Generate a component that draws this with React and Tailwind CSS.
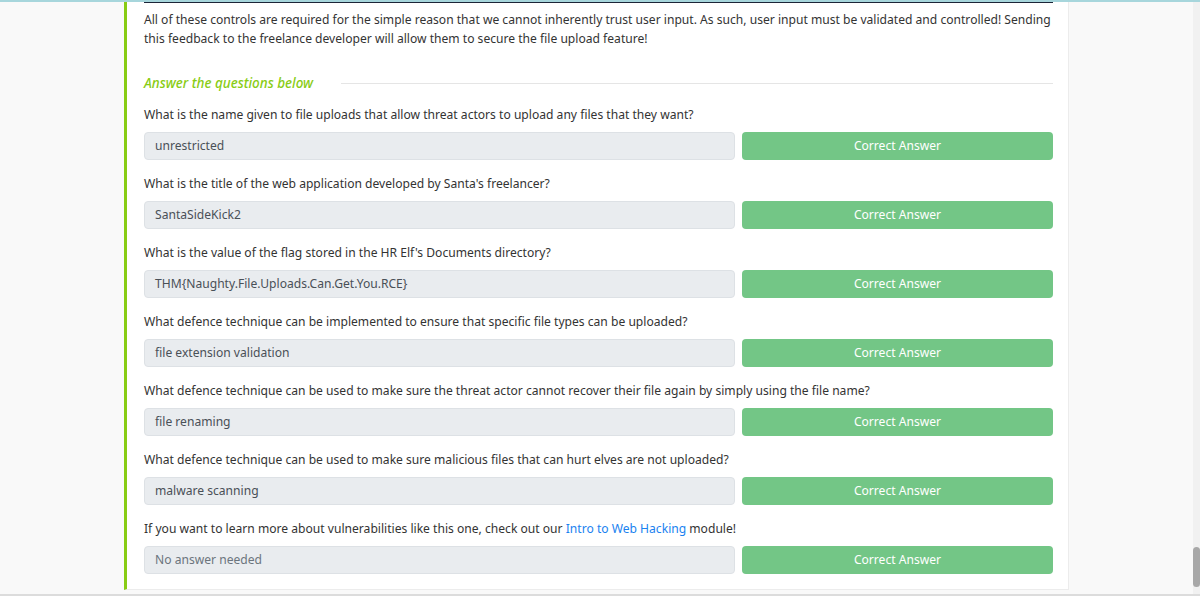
import React from "react";

const questions = [
  {
    q: "What is the name given to file uploads that allow threat actors to upload any files that they want?",
    a: "unrestricted",
  },
  {
    q: "What is the title of the web application developed by Santa's freelancer?",
    a: "SantaSideKick2",
  },
  {
    q: "What is the value of the flag stored in the HR Elf's Documents directory?",
    a: "THM{Naughty.File.Uploads.Can.Get.You.RCE}",
  },
  {
    q: "What defence technique can be implemented to ensure that specific file types can be uploaded?",
    a: "file extension validation",
  },
  {
    q: "What defence technique can be used to make sure the threat actor cannot recover their file again by simply using the file name?",
    a: "file renaming",
  },
  {
    q: "What defence technique can be used to make sure malicious files that can hurt elves are not uploaded?",
    a: "malware scanning",
  },
];

function AnswerRow({ question, answer, placeholder }) {
  return (
    <div className="mt-[14px] first:mt-0">
      <p className="h-5 leading-5">{question}</p>
      <div className="mt-[7px] flex gap-[7px]">
        <div
          className={
            "h-7 w-[591px] rounded border border-[#dde1e5] bg-[#e9ecef] px-[10px] leading-[26px] " +
            (placeholder ? "text-[#6c757d]" : "text-[#495057]")
          }
        >
          {answer}
        </div>
        <button className="h-7 flex-1 rounded bg-[#73c686] text-white leading-7">
          Correct Answer
        </button>
      </div>
    </div>
  );
}

export default function App() {
  return (
    <div
      className="relative h-[596px] w-[1200px] overflow-hidden border-t-2 border-[#a7d6dc] bg-[#f9f9f9] text-[12.1px] text-[#333]"
      style={{ fontFamily: '"Noto Sans", "Open Sans", sans-serif' }}
    >
      <div className="flex h-full">
        <div className="w-[124px] shrink-0" />
        <div className="h-[590px] w-[945px] shrink-0 border-l-[3px] border-r border-b border-[#88cc14] border-r-[#ececec] border-b-[#ececec] bg-white pl-[17px] pr-[15px] -mt-[2px] pt-[2px]">
          <div className="h-px bg-[#1c2538]" />
          <p className="mt-[7px] leading-[19px]">
            All of these controls are required for the simple reason that we cannot inherently trust user input. As such, user input must be validated and controlled! Sending this feedback to the freelance developer will allow them to secure the file upload feature!
          </p>
          <div className="mt-[23px] flex items-center gap-[28px]">
            <h3 className="text-[13.5px] italic font-medium leading-6 text-[#88cc14]">
              Answer the questions below
            </h3>
            <div className="h-px flex-1 bg-[#e5e5e5]" />
          </div>
          <div className="mt-[10px]">
            {questions.map((item) => (
              <AnswerRow key={item.q} question={item.q} answer={item.a} />
            ))}
            <AnswerRow
              question={
                <>
                  If you want to learn more about vulnerabilities like this one, check out our{" "}
                  <span className="text-[#1a82f0]">Intro to Web Hacking</span> module!
                </>
              }
              answer="No answer needed"
              placeholder
            />
          </div>
        </div>
      </div>
      <div className="absolute right-0 top-0 h-full w-[7px] bg-[#f1f1f1]">
        <div className="mt-[545px] h-[40px] rounded-sm bg-[#a8a8a8]" />
      </div>
      <div className="absolute bottom-0 left-0 h-[2px] w-full bg-[#dcdcdc]" />
    </div>
  );
}
